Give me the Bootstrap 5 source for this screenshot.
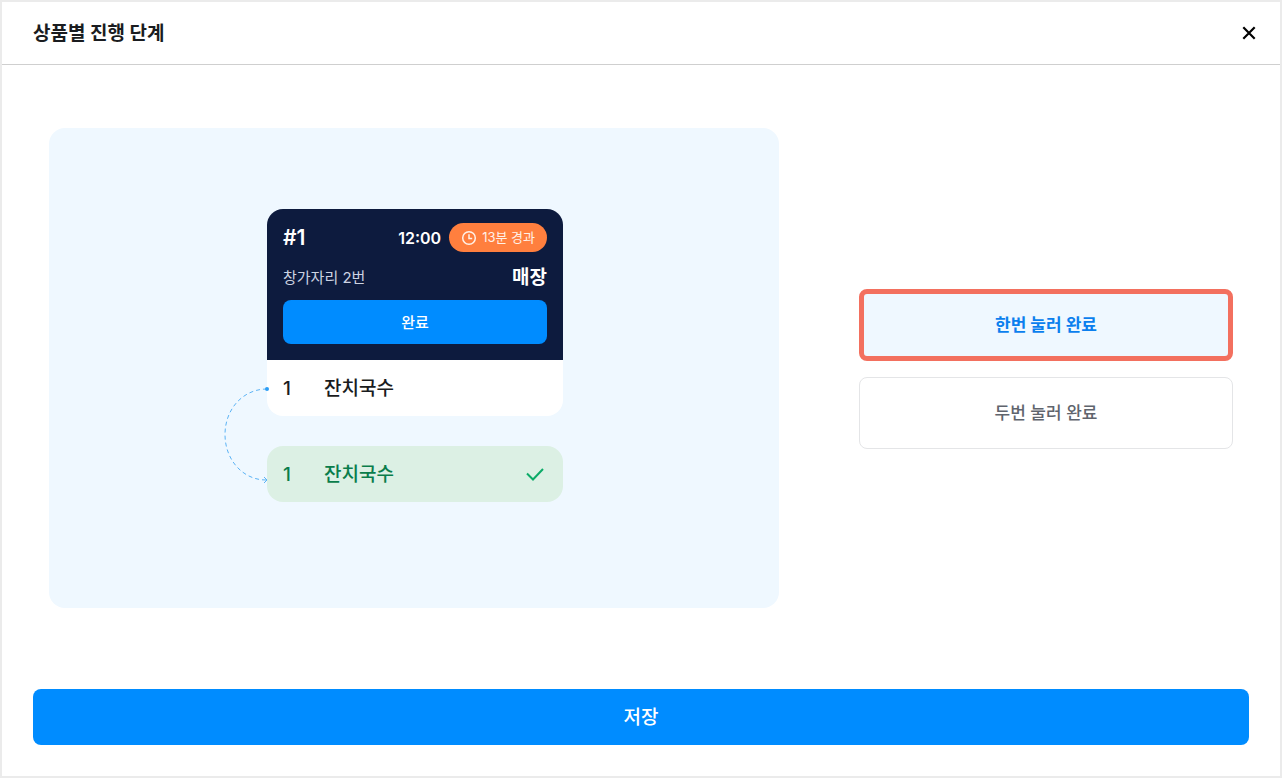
<!DOCTYPE html>
<html lang="ko">
<head>
<meta charset="utf-8">
<meta name="viewport" content="width=device-width, initial-scale=1">
<title>상품별 진행 단계</title>
<link href="https://cdn.jsdelivr.net/npm/bootstrap@5.3.0/dist/css/bootstrap.min.css" rel="stylesheet">
<style>
  body { font-family: Inter, "Noto Sans CJK KR", sans-serif; color: #1a1c20; background: #fff; }
  .frame { border: 2px solid #ebebeb; }
  .frame-head { padding: 0 22px 0 31px; height: 63px; border-bottom: 1px solid #cfcfcf; }
  .frame-title { font-size: 19px; line-height: 28px; font-weight: 700; padding-top: 2px; }
  .close-btn { width: 18px; height: 18px; color: #000; }
  .frame-body { display: grid; grid-template-columns: 730fr 374fr; column-gap: 80px; padding: 63px 47px 64px; }
  .preview { background: #eff8ff; border-radius: 16px; min-height: 480px; padding: 0 0 25px 2px; }
  .demo { width: 296px; }
  .ticket { background: #0d1b3e; border-radius: 16px 16px 0 0; padding: 14px 16px 16px; color: #fff; }
  .order-no { font-size: 21px; font-weight: 600; line-height: 29px; }
  .order-time { font-size: 16px; font-weight: 600; line-height: 27px; padding-top: 2px; }
  .elapsed { background: #ff7f3e; border-radius: 15px; height: 29px; padding: 0 12px; font-size: 13px; line-height: 29px; gap: 5px; color: #fff1e8; }
  .seat-row { height: 30px; margin: 10px 0 8px; padding-top: 2px; }
  .seat { font-size: 15px; color: #ccd3e2; }
  .place { font-size: 19px; font-weight: 700; }
  .main-btn { background: #008cff; color: #fff; border: 0; border-radius: 8px; font-weight: 500; }
  .main-btn:hover { background: #007de6; color: #fff; }
  .done-btn { height: 44px; font-size: 15px; padding: 2px 0 0; }
  .save-btn { height: 56px; font-size: 19px; padding: 2px 0 0; }
  .item-line { height: 56px; padding: 2px 16px 0; font-size: 19px; font-weight: 500; }
  .item-count { width: 41px; }
  .item-open { background: #fff; border-radius: 0 0 16px 16px; }
  .item-done { background: #dcf0e4; border-radius: 16px; color: #0a7d4b; margin-top: 30px; }
  .flow-arrow { right: calc(100% - 5px); bottom: 17px; }
  .choices { padding-top: 2px; }
  .choice { height: 72px; padding-top: 2px; font-size: 17px; font-weight: 500; border-radius: 8px; cursor: pointer; border: 1px solid #e4e5e7; color: #5f646d; }
  .btn-check:checked + .choice { border: 5px solid #f3705f; background: #eff8ff; color: #0b7fee; font-weight: 700; }
  .frame-foot { padding: 17px 31px 31px; }
  @media (max-width: 991px) { .frame-body { grid-template-columns: 1fr; row-gap: 32px; padding: 32px 16px; } }
</style>
</head>
<body>
<div class="frame min-vh-100 d-flex flex-column">
  <header class="frame-head d-flex align-items-center justify-content-between">
    <h1 class="frame-title mb-0">상품별 진행 단계</h1>
    <button type="button" class="close-btn btn p-0 border-0 d-flex" aria-label="닫기">
      <svg width="18" height="18" viewBox="0 0 18 18" fill="none" stroke="currentColor" stroke-width="2.2"><path d="M3.300 3.300l11.400 11.400M14.700 3.300l-11.400 11.400"/></svg>
    </button>
  </header>

  <main class="frame-body flex-grow-1 align-items-center">
    <section class="preview d-flex align-items-center justify-content-center">
      <div class="demo position-relative">
        <div class="ticket">
          <div class="d-flex align-items-center">
            <span class="order-no me-auto">#1</span>
            <span class="order-time me-2">12:00</span>
            <span class="elapsed d-flex align-items-center">
              <svg width="16" height="16" viewBox="0 0 16 16" fill="none" stroke="currentColor" stroke-width="1.5"><circle cx="8" cy="8" r="6.3"/><path d="M8 4.2V8.4h3.2"/></svg>
              13분 경과
            </span>
          </div>
          <div class="seat-row d-flex align-items-center justify-content-between">
            <span class="seat">창가자리 2번</span>
            <span class="place">매장</span>
          </div>
          <button type="button" class="btn main-btn done-btn w-100">완료</button>
        </div>
        <div class="item-line item-open d-flex align-items-center">
          <span class="item-count">1</span><span>잔치국수</span>
        </div>
        <div class="item-line item-done d-flex align-items-center">
          <span class="item-count">1</span><span>잔치국수</span>
          <svg class="ms-auto" width="24" height="24" viewBox="0 0 24 24" fill="none" stroke="#0cab68" stroke-width="2"><path d="M4 10.500l6 6L20 6"/></svg>
        </div>
        <svg class="flow-arrow position-absolute" width="50" height="100" viewBox="0 0 50 100" fill="none" stroke="#5bb3f5">
          <path d="M45 4C21 4 3 24 3 49.500S21 95 44 95" stroke-dasharray="4 3"/>
          <path d="M42 92l3 3-3 3"/>
          <circle cx="45" cy="4" r="2" fill="#2c9df5" stroke="none"/>
        </svg>
      </div>
    </section>

    <section class="choices d-flex flex-column gap-3" role="radiogroup" aria-label="완료 방식">
      <div>
        <input class="btn-check" type="radio" name="step" id="once" checked>
        <label class="choice d-flex align-items-center justify-content-center" for="once">한번 눌러 완료</label>
      </div>
      <div>
        <input class="btn-check" type="radio" name="step" id="twice">
        <label class="choice d-flex align-items-center justify-content-center" for="twice">두번 눌러 완료</label>
      </div>
    </section>
  </main>

  <footer class="frame-foot">
    <button type="button" class="btn main-btn save-btn w-100">저장</button>
  </footer>
</div>
<script src="https://cdn.jsdelivr.net/npm/bootstrap@5.3.0/dist/js/bootstrap.bundle.min.js"></script>
</body>
</html>
